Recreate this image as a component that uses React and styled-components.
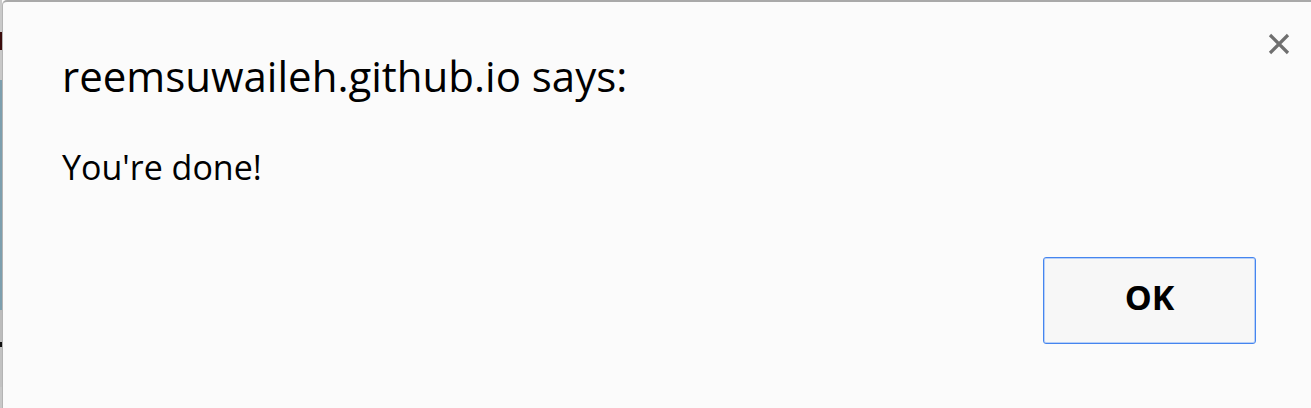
import React from "react";
import styled, { createGlobalStyle } from "styled-components";

const Global = createGlobalStyle`
  html, body { margin: 0; padding: 0; background: #fbfbfb; overflow: hidden; }
  #root { width: 1311px; height: 408px; }
`;

const Page = styled.div`
  display: flex;
  width: 1311px;
  height: 408px;
  background: #fbfbfb;
`;

const Strip = styled.div`
  width: 2px;
  display: flex;
  flex-direction: column;
  flex-shrink: 0;
`;

const Segment = styled.div`
  height: ${(p) => p.$h}px;
  background: ${(p) => p.$c};
  flex-shrink: 0;
`;

const Dialog = styled.div`
  flex: 1;
  display: flex;
  flex-direction: column;
  position: relative;
  background: #fbfbfb;
  border-top: 2px solid #a9a9a9;
  border-left: 1px solid #b4b4b4;
  border-top-left-radius: 5px;
  padding: 0 55px 0 59px;
  font-family: "Open Sans", "Noto Sans", sans-serif;
  color: #000;
`;

const Title = styled.h1`
  margin: 51px 0 0;
  font-size: 42px;
  font-weight: 400;
  line-height: 46px;
  letter-spacing: 0;
  white-space: nowrap;
`;

const Message = styled.p`
  margin: 48px 0 0;
  font-size: 34px;
  line-height: 40px;
`;

const Actions = styled.div`
  margin-top: 70px;
  display: flex;
  justify-content: flex-end;
`;

const OkButton = styled.button`
  width: 213px;
  height: 87px;
  box-sizing: border-box;
  padding: 0 0 7px;
  border: 1px solid #4585ef;
  box-shadow: inset 0 0 0 1px #b8d0f7;
  border-radius: 3px;
  background: #f7f7f7;
  font-family: "Open Sans", "Noto Sans", sans-serif;
  font-weight: 700;
  font-size: 34px;
  color: #000;
  cursor: pointer;
`;

const Close = styled.button`
  position: absolute;
  top: 29px;
  right: 19px;
  width: 26px;
  height: 26px;
  padding: 0;
  border: 0;
  background: transparent;
  display: flex;
  align-items: center;
  justify-content: center;
`;

const strip = [
  [32, "#c9c9c9"],
  [18, "#3b0c0c"],
  [30, "#c8c8c8"],
  [230, "#7d9fae"],
  [32, "#bcbcbc"],
  [5, "#111"],
  [40, "#c2c2c2"],
  [21, "#c8c8c8"],
];

export default function App() {
  return (
    <>
      <Global />
      <Page>
        <Strip>
          {strip.map(([h, c], i) => (
            <Segment key={i} $h={h} $c={c} />
          ))}
        </Strip>
        <Dialog>
          <Close aria-label="Close">
            <svg width="24" height="24" viewBox="0 0 24 24">
              <path d="M3 3 L21 21 M21 3 L3 21" stroke="#6f6f6f" strokeWidth="3.2" strokeLinecap="butt" />
            </svg>
          </Close>
          <Title>reemsuwaileh.github.io says:</Title>
          <Message>You're done!</Message>
          <Actions>
            <OkButton>OK</OkButton>
          </Actions>
        </Dialog>
      </Page>
    </>
  );
}
